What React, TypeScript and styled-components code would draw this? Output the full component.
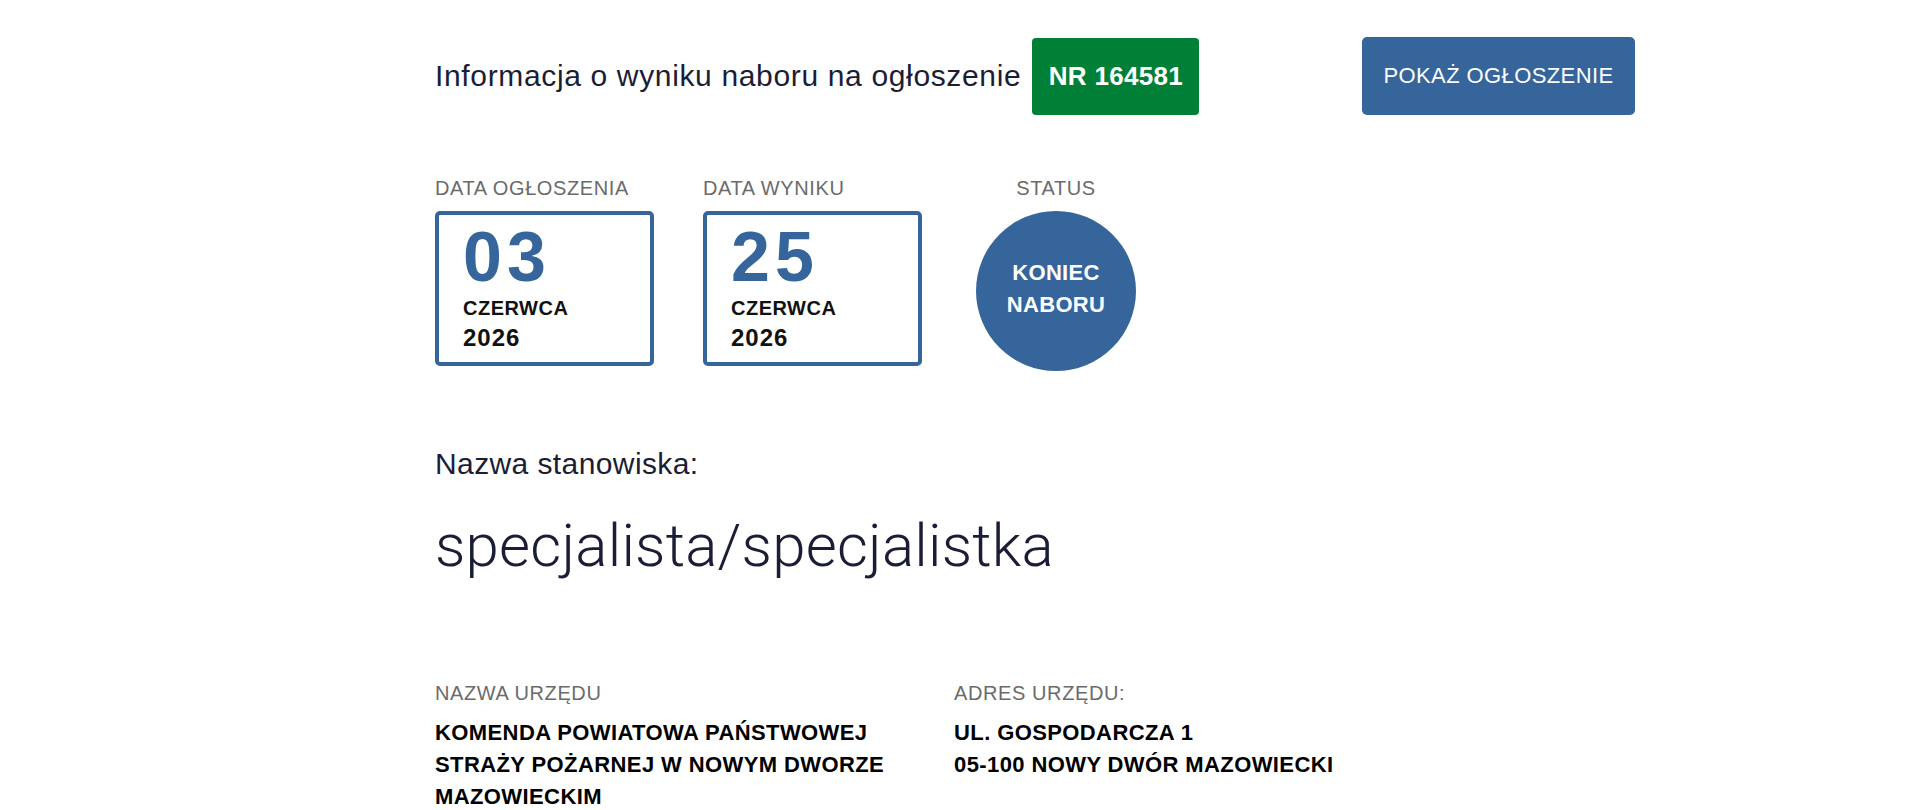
import React from 'react';
import styled, { createGlobalStyle } from 'styled-components';

const BLUE = '#35659b';
const GREEN = '#008037';
const INK = '#1b1d36';
const MUTED = '#6b6b6b';

const GlobalStyle = createGlobalStyle`
  html, body {
    margin: 0;
    padding: 0;
    background: #fff;
  }

  body {
    font-family: 'Liberation Sans', Arial, sans-serif;
    color: ${INK};
  }
`;

const Page = styled.main`
  width: 1200px;
  margin-left: 435px;
  padding-top: 37px;
`;

const Header = styled.header`
  display: flex;
  align-items: center;
  height: 78px;
`;

const Title = styled.h1`
  margin: 0;
  font-size: 30px;
  font-weight: 400;
  letter-spacing: 0.65px;
  color: ${INK};
`;

const NumberBadge = styled.span`
  display: inline-flex;
  align-items: center;
  justify-content: center;
  width: 167px;
  height: 77px;
  margin-left: 11px;
  border-radius: 4px;
  background: ${GREEN};
  color: #fff;
  font-size: 26px;
  font-weight: 700;
  letter-spacing: 0.3px;
`;

const ShowButton = styled.button`
  width: 273px;
  height: 78px;
  margin-left: auto;
  border: none;
  border-radius: 5px;
  background: ${BLUE};
  color: #fff;
  font-family: inherit;
  font-size: 22px;
  letter-spacing: 0.4px;
  text-transform: uppercase;
  cursor: pointer;
`;

const DateRow = styled.section`
  display: flex;
  gap: 49px;
  margin-top: 61px;
`;

const Column = styled.div<{ $width: number; $center?: boolean; $offset?: number }>`
  display: flex;
  flex-direction: column;
  align-items: ${(p) => (p.$center ? 'center' : 'flex-start')};
  width: ${(p) => p.$width}px;
  margin-left: ${(p) => p.$offset ?? 0}px;
`;

const Label = styled.div`
  margin-bottom: 11px;
  font-size: 20px;
  line-height: 24px;
  letter-spacing: 0.6px;
  color: ${MUTED};
  text-transform: uppercase;
`;

const DateBox = styled.div`
  box-sizing: border-box;
  display: flex;
  flex-direction: column;
  width: 219px;
  height: 155px;
  padding: 2px 0 0 24px;
  border: 4px solid ${BLUE};
  border-radius: 5px;
`;

const Day = styled.span`
  font-size: 70px;
  line-height: normal;
  font-weight: 700;
  letter-spacing: 5px;
  color: ${BLUE};
`;

const Month = styled.span`
  font-size: 20px;
  line-height: 22.4px;
  font-weight: 700;
  letter-spacing: 0.5px;
  color: #111;
  text-transform: uppercase;
`;

const Year = styled.span`
  margin-top: 5px;
  font-size: 24px;
  line-height: 28px;
  font-weight: 700;
  letter-spacing: 1px;
  color: #111;
`;

const StatusBadge = styled.div`
  box-sizing: border-box;
  display: flex;
  flex-direction: column;
  align-items: center;
  justify-content: center;
  width: 160px;
  height: 160px;
  padding-bottom: 4px;
  border-radius: 50%;
  background: ${BLUE};
  color: #fff;
  font-size: 22px;
  line-height: 32px;
  font-weight: 700;
  letter-spacing: 0.3px;
  text-align: center;
`;

const FieldCaption = styled.div`
  margin-top: 75px;
  font-size: 30px;
  line-height: 36px;
  letter-spacing: 0.4px;
  color: ${INK};
`;

const PositionName = styled.h2`
  margin: 28px 0 0;
  font-family: Roboto, 'Liberation Sans', sans-serif;
  font-size: 60px;
  line-height: 72px;
  font-weight: 300;
  letter-spacing: 0.2px;
  color: ${INK};
`;

const InfoGrid = styled.section`
  display: grid;
  grid-template-columns: 490px 1fr;
  column-gap: 29px;
  margin-top: 99px;
`;

const InfoLabel = styled.div`
  margin-bottom: 12px;
  font-size: 20px;
  line-height: 24px;
  letter-spacing: 0.6px;
  color: ${MUTED};
  text-transform: uppercase;
`;

const InfoValue = styled.div`
  font-size: 22px;
  line-height: 32px;
  font-weight: 700;
  letter-spacing: 0.4px;
  color: #000;
  text-transform: uppercase;
`;

type DateCardProps = {
  label: string;
  day: string;
  month: string;
  year: string;
};

const DateCard: React.FC<DateCardProps> = ({ label, day, month, year }) => (
  <Column $width={219}>
    <Label>{label}</Label>
    <DateBox>
      <Day>{day}</Day>
      <Month>{month}</Month>
      <Year>{year}</Year>
    </DateBox>
  </Column>
);

const App: React.FC = () => (
  <>
    <GlobalStyle />
    <Page>
      <Header>
        <Title>Informacja o wyniku naboru na ogłoszenie</Title>
        <NumberBadge>NR 164581</NumberBadge>
        <ShowButton type="button">Pokaż ogłoszenie</ShowButton>
      </Header>

      <DateRow>
        <DateCard label="Data ogłoszenia" day="03" month="czerwca" year="2026" />
        <DateCard label="Data wyniku" day="25" month="czerwca" year="2026" />
        <Column $width={160} $center $offset={5}>
          <Label>Status</Label>
          <StatusBadge>
            <span>KONIEC</span>
            <span>NABORU</span>
          </StatusBadge>
        </Column>
      </DateRow>

      <FieldCaption>Nazwa stanowiska:</FieldCaption>
      <PositionName>specjalista/specjalistka</PositionName>

      <InfoGrid>
        <div>
          <InfoLabel>Nazwa urzędu</InfoLabel>
          <InfoValue>Komenda Powiatowa Państwowej Straży Pożarnej w Nowym Dworze Mazowieckim</InfoValue>
        </div>
        <div>
          <InfoLabel>Adres urzędu:</InfoLabel>
          <InfoValue>
            ul. Gospodarcza 1
            <br />
            05-100 Nowy Dwór Mazowiecki
          </InfoValue>
        </div>
      </InfoGrid>
    </Page>
  </>
);

export default App;
